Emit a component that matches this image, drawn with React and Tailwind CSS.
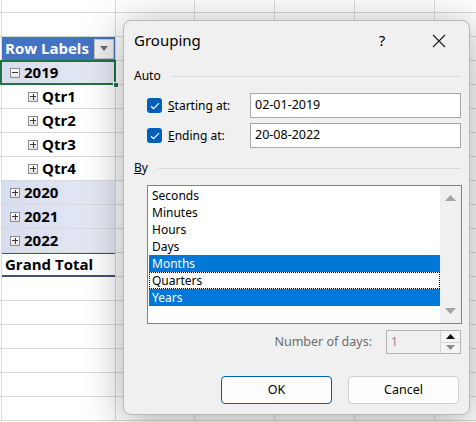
import React from 'react';

const colW = ['w-[2px]', 'w-[114px]', 'w-[79px]', 'w-[80px]', 'w-[80px]', 'w-[80px]', 'w-[80px]', 'flex-1'];

function ExpandBox({ minus }) {
  return (
    <span className="relative w-[10px] h-[10px] border border-[#8c8c8c] bg-gradient-to-b from-white to-[#e4e4e4] shrink-0 flex items-center justify-center">
      <span className="absolute w-[6px] h-px bg-[#3a3a3a]" />
      {!minus && <span className="absolute w-px h-[6px] bg-[#3a3a3a]" />}
    </span>
  );
}

function PivotCell({ row }) {
  if (row === 2) {
    return (
      <div className="h-full bg-[#4472c4] flex items-center justify-between pl-[3px] pr-px text-white font-bold">
        <span>Row Labels</span>
        <span className="w-[20px] h-[20px] bg-[#f0f0f0] border border-[#c6c6c6] flex items-center justify-center">
          <svg width="8" height="5" viewBox="0 0 8 5"><path d="M0 0h8L4 5z" fill="#6b6b6b" /></svg>
        </span>
      </div>
    );
  }
  if (row === 3) {
    return (
      <div className="relative h-full bg-gradient-to-r from-[#d6ddef] to-[#e6eaf5] flex items-center gap-[4px] pl-[8px] font-bold">
        <ExpandBox minus />
        <span>2019</span>
        <span className="absolute -left-[2px] -top-px right-[-1px] bottom-[-1px] border-2 border-[#217346]" />
        <span className="absolute right-[-4px] bottom-[-4px] w-[6px] h-[6px] bg-[#217346] border border-white" />
      </div>
    );
  }
  if (row >= 4 && row <= 7) {
    return (
      <div className="h-full bg-white flex items-center gap-[4px] pl-[26px] font-bold">
        <ExpandBox />
        <span>Qtr{row - 3}</span>
      </div>
    );
  }
  if (row >= 8 && row <= 10) {
    return (
      <div className="h-full bg-gradient-to-r from-[#d6ddef] to-[#e6eaf5] flex items-center gap-[4px] pl-[8px] font-bold">
        <ExpandBox />
        <span>{2012 + row}</span>
      </div>
    );
  }
  if (row === 11) {
    return (
      <div className="h-[calc(100%+1px)] bg-white border-t border-[#44546a] border-b-2 flex items-center pl-[3px] font-bold">
        Grand Total
      </div>
    );
  }
  return null;
}

function Sheet() {
  const rows = Array.from({ length: 18 }, (_, i) => i);
  return (
    <div className="flex flex-col font-['Open_Sans',sans-serif] text-[15px] text-black">
      {rows.map((r) => (
        <div key={r} className={r === 0 ? 'flex h-[13px]' : 'flex h-[24px]'}>
          {colW.map((w, c) => (
            <div key={c} className={`${w} shrink-0 border-r border-b border-[#d9d9d9] h-full`}>
              {c === 1 && r >= 2 && r <= 11 && <PivotCell row={r} />}
            </div>
          ))}
        </div>
      ))}
    </div>
  );
}

function Check() {
  return (
    <span className="w-[15px] h-[15px] rounded-[3px] bg-[#005fb8] flex items-center justify-center shrink-0">
      <svg width="10" height="8" viewBox="0 0 10 8">
        <path d="M1 4.2 3.6 6.6 9 1.2" fill="none" stroke="white" strokeWidth="1.2" />
      </svg>
    </span>
  );
}

function Section({ label, ul }) {
  return (
    <div className="flex items-center h-[16px] pl-[10px] pr-[8px]">
      <span>
        {ul ? <><span className="underline">{label[0]}</span>{label.slice(1)}</> : label}
      </span>
      <span className="flex-1 h-px bg-[#dadada] ml-[10px]" />
    </div>
  );
}

function DateRow({ ul, rest, value, className }) {
  return (
    <div className={`flex items-center h-[25px] pl-[23px] ${className}`}>
      <Check />
      <span className="ml-[6px] w-[82px]">
        <span className="underline">{ul}</span>{rest}
      </span>
      <div className="w-[211px] h-full bg-white border border-[#a7a7a7] flex items-center pl-[4px] text-[12.5px]">
        {value}
      </div>
    </div>
  );
}

const items = ['Seconds', 'Minutes', 'Hours', 'Days', 'Months', 'Quarters', 'Years'];

function Tri({ down, color }) {
  return (
    <svg width="11" height="6" viewBox="0 0 11 6">
      <path d={down ? 'M0 0h11L5.5 6z' : 'M0 6h11L5.5 0z'} fill={color} />
    </svg>
  );
}

function Dialog() {
  return (
    <div className="absolute left-[123px] top-[20px] w-[347px] h-[395px] rounded-[8px] bg-[#f0f0f0] border border-[#b8b8b8] shadow-[0_6px_40px_rgba(0,0,0,0.34)] flex flex-col font-['Noto_Sans',sans-serif] text-[12px] text-black">
      {/* title bar */}
      <div className="h-[39px] flex items-center pl-[10px]">
        <span className="text-[15px] flex-1">Grouping</span>
        <span className="w-[60px] text-center text-[15px]">?</span>
        <span className="w-[54px] flex justify-center mr-[3px]">
          <svg width="14" height="14" viewBox="0 0 14 14">
            <path d="M1 1l12 12M13 1 1 13" stroke="#1a1a1a" strokeWidth="1.1" />
          </svg>
        </span>
      </div>

      <div className="mt-[8px]"><Section label="Auto" /></div>
      <DateRow className="mt-[9px]" ul="S" rest="tarting at:" value="02-01-2019" />
      <DateRow className="mt-[5px]" ul="E" rest="nding at:" value="20-08-2022" />

      <div className="mt-[12px]"><Section label="By" ul /></div>

      {/* list */}
      <div className="mt-[9px] ml-[23px] w-[315px] h-[139px] bg-white border border-[#828282] flex">
        <div className="flex-1 pt-px pl-px">
          {items.map((it) => (
            <div
              key={it}
              className={
                it === 'Months' || it === 'Years'
                  ? 'h-[17px] flex items-center pl-[3px] bg-[#0078d7] text-white'
                  : it === 'Quarters'
                  ? 'h-[17px] flex items-center pl-[2px] border border-dotted border-black'
                  : 'h-[17px] flex items-center pl-[3px]'
              }
            >
              {it}
            </div>
          ))}
        </div>
        <div className="w-[21px] bg-[#f0f0f0] flex flex-col justify-between items-center py-[9px]">
          <Tri color="#a3a3a3" />
          <Tri down color="#a3a3a3" />
        </div>
      </div>

      {/* number of days */}
      <div className="mt-[6px] h-[24px] flex items-center justify-end pr-[8px]">
        <span className="text-[#6d6d6d] text-[12.5px] mr-[14px]">Number of days:</span>
        <div className="w-[75px] h-full border border-[#b4b4b4] bg-[#f0f0f0] flex">
          <span className="flex-1 pl-[4px] text-[#8a8a8a] flex items-center">1</span>
          <div className="w-[20px] flex flex-col border-l border-[#d4d4d4]">
            <span className="flex-1 flex items-center justify-center border-b border-[#d4d4d4] bg-[#f5f5f5]">
              <svg width="9" height="5" viewBox="0 0 9 5"><path d="M0 5h9L4.5 0z" fill="#111" /></svg>
            </span>
            <span className="flex-1 flex items-center justify-center bg-[#f5f5f5]">
              <svg width="9" height="5" viewBox="0 0 9 5"><path d="M0 0h9L4.5 5z" fill="#8a8a8a" /></svg>
            </span>
          </div>
        </div>
      </div>

      {/* buttons */}
      <div className="mt-[22px] flex justify-end gap-[16px] pr-[10px]">
        <button className="w-[111px] h-[28px] rounded-[4px] bg-[#fdfdfd] border border-[#005fb8] text-[12.5px]">OK</button>
        <button className="w-[111px] h-[28px] rounded-[4px] bg-[#fdfdfd] border border-[#d0d0d0] text-[12.5px]">Cancel</button>
      </div>
    </div>
  );
}

export default function App() {
  return (
    <div className="relative w-[476px] h-[422px] overflow-hidden bg-white">
      <Sheet />
      <Dialog />
    </div>
  );
}
